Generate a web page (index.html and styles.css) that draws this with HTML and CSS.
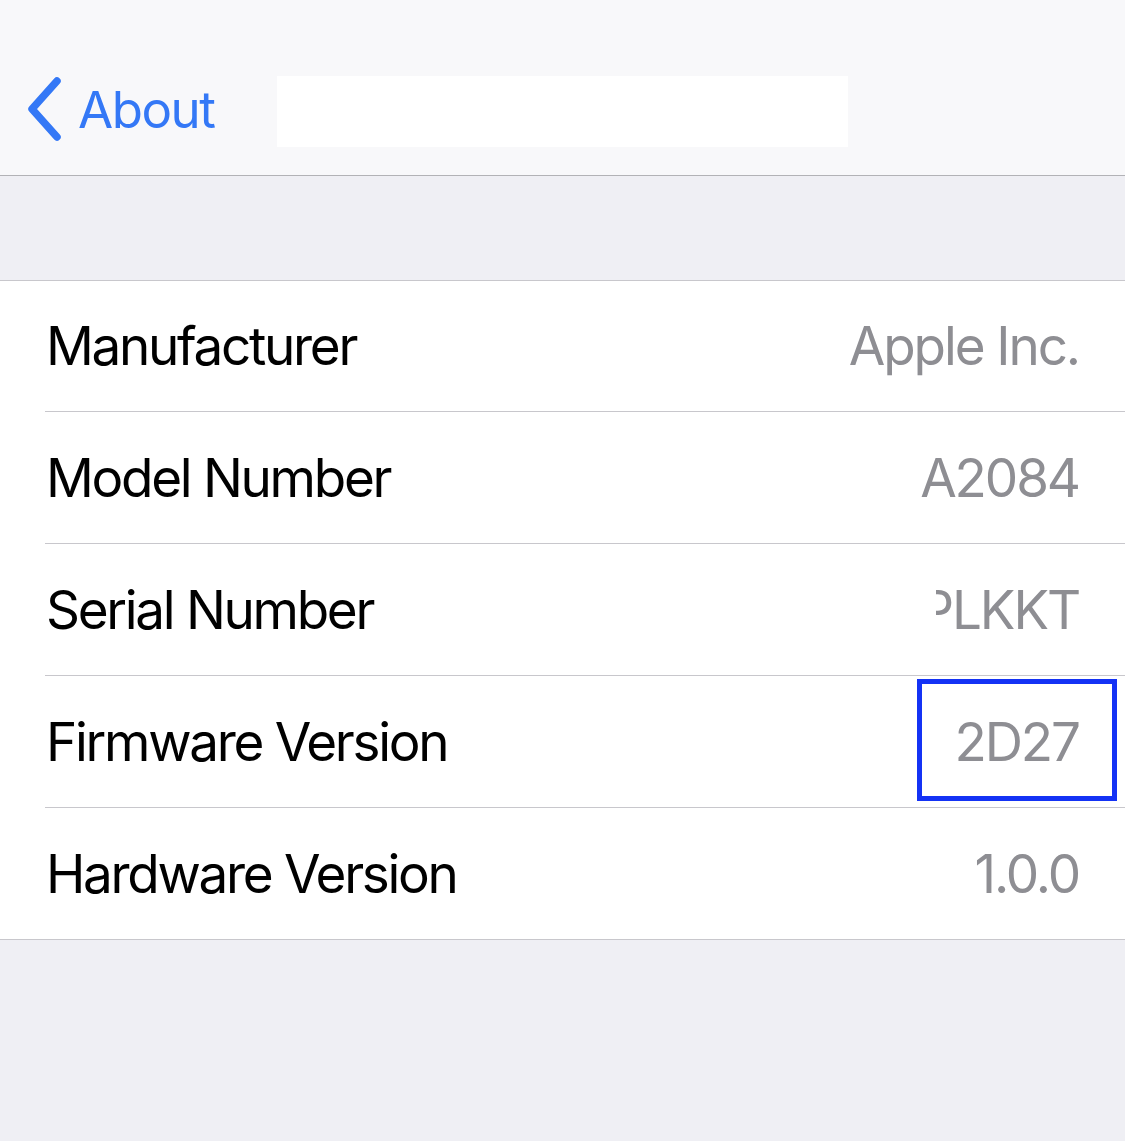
FILE: index.html
```html
<!DOCTYPE html>
<html>
<head>
<meta charset="utf-8">
<link rel="stylesheet" href="styles.css">
</head>
<body>
<div class="page">
  <header class="navbar">
    <div class="back">
      <svg class="chev" width="40" height="66" viewBox="0 0 40 66"><path d="M33 5 L8 33 L33 61" fill="none" stroke="#3478f6" stroke-width="7.5" stroke-linecap="round" stroke-linejoin="round"/></svg>
      <span class="back-label">About</span>
    </div>
    <div class="title-redact"></div>
  </header>
  <div class="gap"></div>
  <ul class="list">
    <li class="row first"><span class="label">Manufacturer</span><span class="value">Apple Inc.</span></li>
    <li class="row"><span class="label">Model Number</span><span class="value">A2084</span></li>
    <li class="row"><span class="label">Serial Number</span><span class="value serial">PLKKT<span class="redact"></span></span></li>
    <li class="row"><span class="label">Firmware Version</span><span class="value boxed">2D27<span class="highlight"></span></span></li>
    <li class="row last"><span class="label">Hardware Version</span><span class="value">1.0.0</span></li>
  </ul>
</div>
</body>
</html>
```

FILE: styles.css
```css
html, body {
  margin: 0;
  padding: 0;
}
body {
  background: #efeff4;
  font-family: Inter, "Noto Sans", "Liberation Sans", sans-serif;
  width: 1125px;
  height: 1141px;
  overflow: hidden;
}
.page {
  display: flex;
  flex-direction: column;
}
.navbar {
  height: 175px;
  background: #f8f8fa;
  border-bottom: 1px solid #b2b2b6;
  display: flex;
  align-items: center;
  position: relative;
}
.back {
  display: flex;
  align-items: center;
  margin-left: 24px;
  margin-top: 43px;
  height: 70px;
}
.chev {
  display: block;
}
.back-label {
  color: #3478f6;
  font-size: 51px;
  margin-left: 14px;
  letter-spacing: -1.5px;
}
.title-redact {
  position: absolute;
  left: 277px;
  top: 76px;
  width: 571px;
  height: 71px;
  background: #ffffff;
}
.gap {
  height: 104px;
  border-bottom: 1px solid #c8c7cc;
}
.list {
  list-style: none;
  margin: 0;
  padding: 0 0 0 45px;
  background: #ffffff;
  border-bottom: 1px solid #c8c7cc;
}
.row {
  height: 131px;
  border-bottom: 1px solid #c8c7cc;
  display: flex;
  align-items: center;
  justify-content: space-between;
  padding: 0 46px 0 1px;
}
.row.first {
  height: 130px;
}
.row.last {
  border-bottom: none;
}
.label {
  font-size: 53px;
  color: #000000;
  letter-spacing: -2.3px;
}
.value {
  font-size: 53px;
  color: #8e8e93;
  position: relative;
  letter-spacing: -2.1px;
}
.redact {
  position: absolute;
  left: -300px;
  top: -10px;
  width: 316px;
  height: 90px;
  background: #ffffff;
}
.highlight {
  position: absolute;
  left: -38px;
  right: -38px;
  top: -31px;
  bottom: -27px;
  border: 5px solid #1432f5;
}
```
